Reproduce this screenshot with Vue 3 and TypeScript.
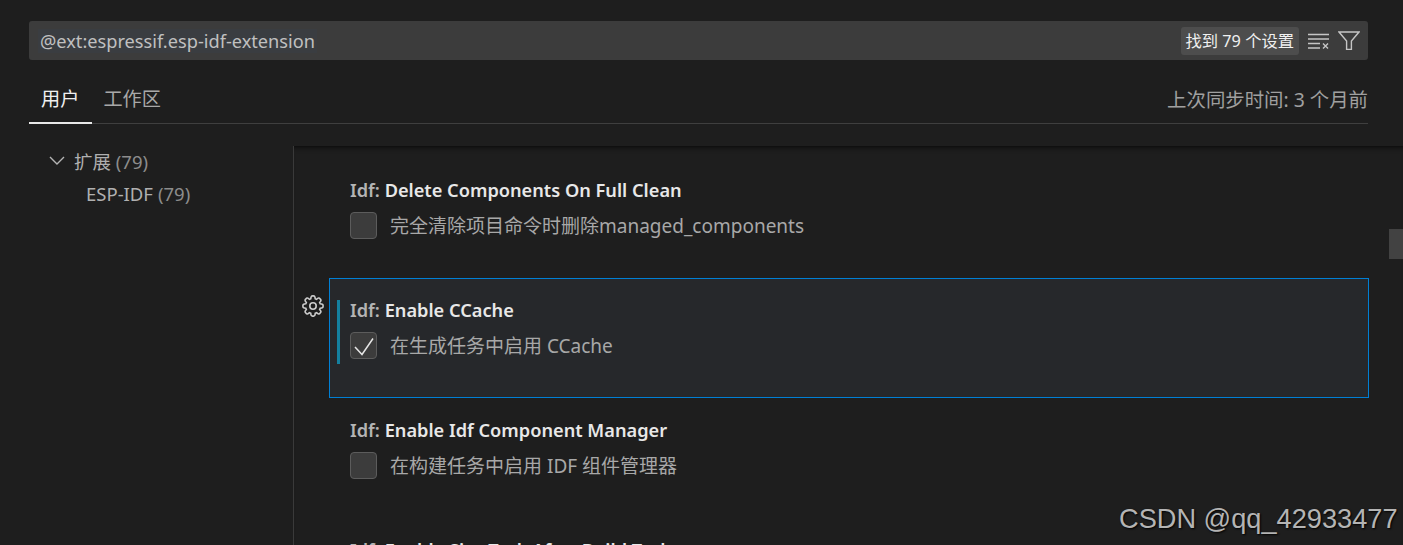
<script setup lang="ts">
interface Setting {
  name: string
  desc: string
  checked: boolean
  focused: boolean
}

const settings: Setting[] = [
  { name: 'Delete Components On Full Clean', desc: '完全清除项目命令时删除managed_components', checked: false, focused: false },
  { name: 'Enable CCache', desc: '在生成任务中启用 CCache', checked: true, focused: true },
  { name: 'Enable Idf Component Manager', desc: '在构建任务中启用 IDF 组件管理器', checked: false, focused: false },
  { name: 'Enable Size Task After Build Task', desc: '', checked: false, focused: false },
]

// rounded 8-tooth cog outline
function cogPath(): string {
  const cx = 11
  const cy = 11
  const pts: string[] = []
  for (let i = 0; i < 8; i++) {
    const a = (i * Math.PI) / 4 - Math.PI / 2
    const p = (r: number, d: number) =>
      `${(cx + r * Math.cos(a + d)).toFixed(2)} ${(cy + r * Math.sin(a + d)).toFixed(2)}`
    pts.push(`${i === 0 ? 'M' : 'L'}${p(7.5, -0.3)}`)
    pts.push(`Q${p(10.8, -0.2)} ${p(10, 0)}`)
    pts.push(`Q${p(10.8, 0.2)} ${p(7.5, 0.3)}`)
  }
  return pts.join(' ') + ' Z'
}
const cog = cogPath()
</script>

<template>
  <div class="page">
    <header class="head">
      <div class="search">
        <span class="query">@ext:espressif.esp-idf-extension</span>
        <span class="count">找到 79 个设置</span>
        <svg class="act clear" viewBox="0 0 22 16" width="22" height="16" fill="none" stroke="#c5c5c5" stroke-width="1.4">
          <path d="M0 1.5h21M0 6h21M0 10.5h12M0 15h12" />
          <path d="M15 10.5l5 5M20 10.5l-5 5" />
        </svg>
        <svg class="act" viewBox="0 0 22 20" width="22" height="20" fill="none" stroke="#c5c5c5" stroke-width="1.4">
          <path d="M1 1h20l-7.6 9v8.4h-4.8V10z" />
        </svg>
      </div>
      <nav class="tabs">
        <span class="tab on">用户</span>
        <span class="tab">工作区</span>
        <span class="sync">上次同步时间: 3 个月前</span>
      </nav>
    </header>

    <div class="body">
      <aside class="tree">
        <div class="node">
          <svg viewBox="0 0 16 10" width="16" height="10" fill="none" stroke="#b4b4b4" stroke-width="1.4">
            <path d="M1 1l7 7 7-7" />
          </svg>
          <span>扩展 <i>(79)</i></span>
        </div>
        <div class="node sub">ESP-IDF <i>(79)</i></div>
      </aside>

      <main class="list">
        <section v-for="s in settings" :key="s.name" class="row" :class="{ focused: s.focused }">
          <svg v-if="s.focused" class="gear" viewBox="0 0 22 22" width="22" height="22" fill="none" stroke="#cccccc" stroke-width="1.6">
            <path :d="cog" />
            <circle cx="11" cy="11" r="3.2" />
          </svg>
          <div class="inner">
            <div class="title">Idf: <b>{{ s.name }}</b></div>
            <label class="check">
              <span class="box">
                <svg v-if="s.checked" viewBox="0 0 20 20" width="20" height="20" fill="none" stroke="#e6e6e6" stroke-width="1.5">
                  <path d="M1 11l7 7.5L19 2.5" />
                </svg>
              </span>
              <span class="desc">{{ s.desc }}</span>
            </label>
          </div>
        </section>
      </main>
    </div>

    <div class="thumb"></div>
    <div class="mark">CSDN @qq_42933477</div>
  </div>
</template>

<style>
html,
body {
  margin: 0;
  background: #1e1e1e;
}
</style>

<style scoped>
.page {
  position: relative;
  width: 1403px;
  height: 545px;
  overflow: hidden;
  background: #1e1e1e;
  color: #b0b0b0;
  font-family: 'Noto Sans', 'Noto Sans CJK SC', sans-serif;
  font-size: 18.2px;
}
.head {
  padding: 21px 35px 0 29px;
}
.search {
  display: flex;
  align-items: center;
  height: 39px;
  padding: 0 8px 0 9px;
  background: #3c3c3c;
  border-radius: 3px;
}
.query {
  padding: 0 2px;
  background: #3a3d41;
  color: #c0c0c0;
}
.count {
  margin-left: auto;
  padding: 2px 5px;
  background: #4d4d4d;
  border-radius: 3px;
  color: #f0f0f0;
  height: 24px;
  line-height: 24px;
  font-size: 16.3px;
}
.act {
  margin-left: 8px;
}
.clear {
  margin-left: 9px;
}
.tabs {
  display: flex;
  align-items: center;
  height: 63px;
  border-bottom: 1px solid #3f3f3f;
  box-sizing: border-box;
  margin-top: 1px;
}
.tab {
  display: flex;
  align-items: center;
  height: 100%;
  padding: 12px 12px 0 11px;
  box-sizing: border-box;
  font-size: 19.2px;
  color: #a8a8a8;
}
.tab.on {
  color: #f0f0f0;
  border-bottom: 2px solid #e8e8e8;
  margin-bottom: -1px;
  padding: 12px 13px 0 12px;
}
.sync {
  margin-left: auto;
  padding-top: 12px;
  font-size: 19.4px;
  color: #a0a0a0;
}
.body {
  display: flex;
  margin-top: 22px;
}
.tree {
  width: 294px;
  flex: none;
  padding: 0 0 0 49px;
  box-sizing: border-box;
  border-right: 1px solid #3a3a3a;
  height: 400px;
  font-size: 18.5px;
}
.node {
  display: flex;
  align-items: center;
  gap: 9px;
  height: 33px;
  position: relative;
  top: -2px;
}
.node i,
.sub i {
  font-style: normal;
  color: #8c8c8c;
}
.sub {
  padding-left: 37px;
  gap: 5px;
}
.list {
  flex: 1;
  padding: 12px 34px 0 35px;
  box-shadow: inset 0 6px 6px -6px #000;
}
.row {
  position: relative;
  height: 120px;
  padding: 21px 0 0 7px;
  box-sizing: border-box;
  border: 1px solid transparent;
}
.row.focused {
  background: #26282b;
  border-color: #007fd4;
}
.gear {
  position: absolute;
  left: -28px;
  top: 16px;
}
.inner {
  padding-left: 10px;
  border-left: 3px solid transparent;
  height: 64px;
  box-sizing: border-box;
}
.focused .inner {
  border-left-color: #14809f;
}
.title {
  height: 24px;
  line-height: 20px;
  font-weight: 600;
  color: #b4b4b4;
}
.title b {
  font-weight: 600;
  color: #e8e8e8;
}
.check {
  display: flex;
  align-items: center;
  gap: 13px;
  height: 27px;
  margin-top: 8px;
}
.box {
  display: flex;
  align-items: center;
  justify-content: center;
  width: 27px;
  height: 27px;
  box-sizing: border-box;
  background: #3c3c3c;
  border: 1px solid #5c5c5c;
  border-radius: 4px;
}
.desc {
  position: relative;
  top: -1px;
  font-size: 19px;
  color: #a8a8a8;
}
.thumb {
  position: absolute;
  right: 0;
  top: 229px;
  width: 14px;
  height: 30px;
  background: #424242;
}
.mark {
  position: absolute;
  left: 1119px;
  top: 503px;
  font-family: 'Liberation Sans', sans-serif;
  font-size: 27.2px;
  color: #b4b4b4;
  text-shadow: 1px 1px 2px #000;
  white-space: nowrap;
}
</style>
